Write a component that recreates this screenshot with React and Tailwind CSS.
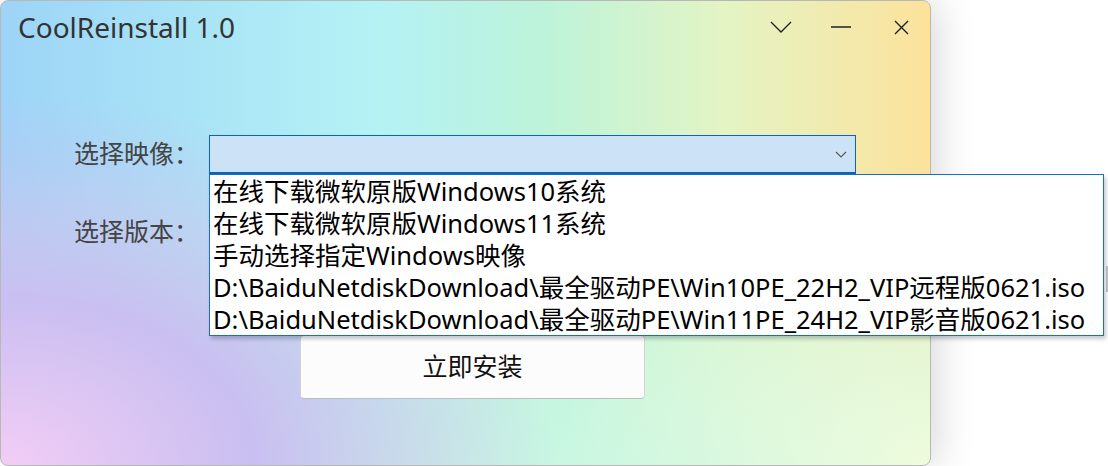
import React from "react";

const items = [
  "在线下载微软原版Windows10系统",
  "在线下载微软原版Windows11系统",
  "手动选择指定Windows映像",
  "D:\\BaiduNetdiskDownload\\最全驱动PE\\Win10PE_22H2_VIP远程版0621.iso",
  "D:\\BaiduNetdiskDownload\\最全驱动PE\\Win11PE_24H2_VIP影音版0621.iso",
];

const font = "font-['Noto_Sans','Noto_Sans_CJK_SC',sans-serif]";

function TitleButtons() {
  return (
    <div className="ml-auto flex h-full items-center mr-[-1px]">
      <button className="flex h-full w-[60px] items-center justify-center">
        <svg width="22" height="12" viewBox="0 0 22 12" fill="none">
          <path d="M1 1L11 11L21 1" stroke="#1f1f1f" strokeWidth="1.3" />
        </svg>
      </button>
      <button className="flex h-full w-[60px] items-center justify-center">
        <svg width="20" height="4" viewBox="0 0 20 4" fill="none">
          <path d="M0 2H20" stroke="#2b2b2b" strokeWidth="1.6" />
        </svg>
      </button>
      <button className="flex h-full w-[60px] items-center justify-center">
        <svg width="15" height="15" viewBox="0 0 15 15" fill="none">
          <path d="M1 1L14 14M14 1L1 14" stroke="#1f1f1f" strokeWidth="1.4" />
        </svg>
      </button>
    </div>
  );
}

function ImageCombo() {
  return (
    <div className="relative h-[39px] w-[647px] shrink-0">
      <div className="flex h-full items-center justify-end border border-b-2 border-[#0a62c2] bg-[#cce3f7] pr-[8px]">
        <svg width="12" height="7" viewBox="0 0 12 7" fill="none">
          <path d="M1 1L6 6L11 1" stroke="#5a5a5a" strokeWidth="1.2" />
        </svg>
      </div>
      <ul className="absolute left-0 top-full z-10 w-[895px] border border-[#1a6fc4] bg-white pl-[3px] text-[25.5px] leading-[32px] text-black shadow-[2px_3px_4px_rgba(0,0,0,0.22)]">
        {items.map((t) => (
          <li key={t} className="whitespace-nowrap">
            {t}
          </li>
        ))}
      </ul>
    </div>
  );
}

export default function App() {
  return (
    <div className={`flex h-[466px] w-[1108px] bg-white ${font}`}>
      <div className="relative h-[466px] w-[931px] shrink-0 rounded-[8px] border border-[#b8b8b8] shadow-[6px_0_40px_rgba(0,0,0,0.16)] [background-image:radial-gradient(ellipse_40%_55%_at_100%_100%,#effbdc_0%,rgba(239,251,220,0)_100%),radial-gradient(ellipse_60%_80%_at_0%_100%,#f2cdf5_0%,#c9bff1_45%,rgba(201,191,241,0)_100%),linear-gradient(180deg,rgba(200,247,226,0)_35%,#c8f7e2_100%),linear-gradient(90deg,#9dd4f7_0%,#b4f2f5_40%,#bcf3da_58%,#e4f4c4_78%,#fce29b_100%)]">
        <div className="flex h-[52px] items-center pl-[17px]">
          <span className="text-[28px] leading-none text-[#333]">CoolReinstall 1.0</span>
          <TitleButtons />
        </div>

        <div className="mt-[82px] flex flex-col">
          <div className="flex h-[39px] items-center">
            <span className="w-[208px] shrink-0 pl-[73px] pb-[4px] text-[25px] leading-[32px] text-[#444] whitespace-nowrap">选择映像：</span>
            <ImageCombo />
          </div>
          <div className="mt-[39px] flex h-[39px] items-center">
            <span className="w-[208px] shrink-0 pl-[73px] pb-[4px] text-[25px] leading-[32px] text-[#444] whitespace-nowrap">选择版本：</span>
            <div className="h-[39px] w-[647px] shrink-0 rounded-[4px] border border-[#d0d0d0] bg-[#fbfbfb]" />
          </div>
          <div className="ml-[299px] mt-[83px] flex h-[64px] w-[345px] items-center justify-center rounded-[4px] border border-[#d2d2d2] border-b-[#bdbdbd] bg-[#fcfcfc] text-[25px] text-[#111]">
            立即安装
          </div>
        </div>
      </div>
      <div className="ml-auto mt-[266px] h-[26px] w-[2px] bg-[#c8c8c8]" />
    </div>
  );
}
